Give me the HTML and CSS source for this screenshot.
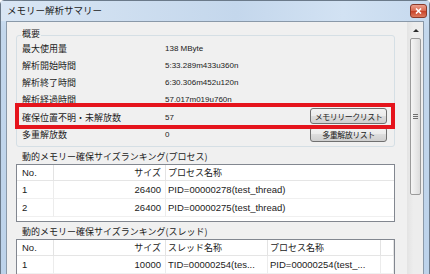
FILE: index.html
```html
<!DOCTYPE html>
<html lang="ja">
<head>
    <meta charset="UTF-8">
    <title>メモリー解析サマリー</title>
    <link rel="stylesheet" href="styles.css">
</head>
<body>
    <div class="window">
        <div class="titlebar">
            <span class="title">メモリー解析サマリー</span>
            <span class="close">
                <svg width="7" height="6" viewBox="0 0 7 6"><path d="M1 0.5 L6 5.5 M6 0.5 L1 5.5" stroke="#fff" stroke-width="1.6"/></svg>
            </span>
        </div>

        <div class="client">
            <div class="content">
                <div class="group">
                    <div class="group-title">概要</div>
                    <div class="row"><span class="label">最大使用量</span><span class="value">138 MByte</span></div>
                    <div class="row"><span class="label">解析開始時間</span><span class="value">5:33.289m433u360n</span></div>
                    <div class="row"><span class="label">解析終了時間</span><span class="value">6:30.306m452u120n</span></div>
                    <div class="row"><span class="label">解析経過時間</span><span class="value">57.017m019u760n</span></div>
                    <div class="row row-tall">
                        <span class="label">確保位置不明・未解放数</span><span class="value">57</span>
                        <button class="btn">メモリリークリスト</button>
                    </div>
                    <div class="row row-short">
                        <span class="label">多重解放数</span><span class="value">0</span>
                        <button class="btn btn-short">多重解放リスト</button>
                    </div>
                    <!-- annotation frame drawn over the row -->
                    <div class="highlight"></div>
                </div>

                <div class="section-label">動的メモリー確保サイズランキング(プロセス)</div>
                <div class="list list-process">
                    <div class="list-row head">
                        <div class="cell">No.</div>
                        <div class="cell num jp">サイズ</div>
                        <div class="cell jp">プロセス名称</div>
                    </div>
                    <div class="list-row">
                        <div class="cell">1</div>
                        <div class="cell num">26400</div>
                        <div class="cell">PID=00000278(test_thread)</div>
                    </div>
                    <div class="list-row">
                        <div class="cell">2</div>
                        <div class="cell num">26400</div>
                        <div class="cell">PID=00000275(test_thread)</div>
                    </div>
                    <div class="list-fill"></div>
                </div>

                <div class="section-label">動的メモリー確保サイズランキング(スレッド)</div>
                <div class="list list-thread">
                    <div class="list-row head">
                        <div class="cell">No.</div>
                        <div class="cell num jp">サイズ</div>
                        <div class="cell jp">スレッド名称</div>
                        <div class="cell jp">プロセス名称</div>
                        <div class="cell"></div>
                    </div>
                    <div class="list-row">
                        <div class="cell">1</div>
                        <div class="cell num">10000</div>
                        <div class="cell">TID=00000254(tes...</div>
                        <div class="cell">PID=00000254(test_...</div>
                        <div class="cell"></div>
                    </div>
                </div>
            </div>

            <div class="scrollbar">
                <div class="arrow-up"><span></span></div>
                <div class="thumb"><span class="grip"></span></div>
            </div>
        </div>
    </div>
</body>
</html>
```

FILE: styles.css
```css
/* Base */
body {
    margin: 0;
    width: 430px;
    height: 274px;
    overflow: hidden;
    background: #ffffff;
    font-family: "Noto Sans CJK JP", sans-serif;
    color: #1b1b1b;
}

/* Window frame */
.window {
    width: 430px;
    height: 300px;
    box-sizing: border-box;
    border: 1px solid #6b7a8a;
    border-radius: 4px 4px 0 0;
    background: linear-gradient(#d3e3f4, #c3d7ec 30px, #bcd2ea);
    display: flex;
    flex-direction: column;
}

.titlebar {
    height: 20px;
    display: flex;
    justify-content: space-between;
    align-items: flex-start;
    padding: 0 2px 0 6px;
    background: linear-gradient(90deg, #d9e6f4, #c4d7ec 55%, #d2e2f3 80%, #c6d9ee);
}

.title {
    font-size: 9.5px;
    line-height: 19px;
}

.close {
    margin-top: 3px;
    width: 17px;
    height: 14px;
    box-sizing: border-box;
    border: 1px solid #8a3a2a;
    border-radius: 3px;
    background: linear-gradient(#eba08e, #d8684f 50%, #c63f25 50%, #dd7a5e);
    display: flex;
    align-items: center;
    justify-content: center;
}

/* Client area */
.client {
    flex: 1;
    margin: 0 5px;
    border: 1px solid #8a99a9;
    background: #f0f0f0;
    display: flex;
}

.content {
    flex: 1;
    padding: 0 12px 0 9px;
}

/* Group box */
.group {
    position: relative;
    margin-top: 13px;
    border: 1px solid #d5dfe5;
    border-radius: 3px;
    padding: 0 7px 4px 5px;
}

.group-title {
    width: fit-content;
    margin: -9px 0 0 -1px;
    padding: 0 1px;
    background: #f0f0f0;
    font-size: 9px;
    line-height: 13px;
}

.row {
    display: flex;
    align-items: center;
    height: 17px;
    font-size: 9px;
}

.row-tall {
    height: 19px;
}

.row-short {
    height: 15px;
}

.label {
    width: 143px;
    line-height: 13px;
}

.value {
    flex: 1;
    font-family: "Liberation Sans", sans-serif;
    font-size: 8px;
}

.btn {
    align-self: flex-start;
    width: 77px;
    height: 16px;
    padding: 0;
    border: 1px solid #707070;
    border-radius: 3px;
    background: linear-gradient(#f2f2f2, #ebebeb 50%, #dddddd 50%, #cfcfcf);
    font-family: "Noto Sans CJK JP", sans-serif;
    font-size: 8px;
    letter-spacing: -0.5px;
    line-height: 13px;
    white-space: nowrap;
    color: #1b1b1b;
}

.btn-short {
    height: 15px;
}

.highlight {
    position: absolute;
    left: -2px;
    top: 67px;
    width: 380px;
    height: 26px;
    box-sizing: border-box;
    border: 4px solid #e5141c;
}

.section-label {
    padding: 2px 0 0 6px;
    height: 15px;
    line-height: 15px;
    font-size: 9px;
}

/* List views */
.list {
    border: 1px solid #828790;
    background: #ffffff;
    font-family: "Liberation Sans", sans-serif;
    font-size: 9.5px;
    color: #1b1b1b;
}

.list-row {
    display: grid;
    height: 18px;
}

.list-row.head {
    height: 16px;
}

.list-process .list-row {
    grid-template-columns: 37px 112px 1fr;
}

.list-thread .list-row {
    grid-template-columns: 37px 112px 102px 113px 1fr;
}

.cell {
    box-sizing: border-box;
    border-right: 1px solid #ececec;
    border-bottom: 1px solid #f0f0f0;
    padding: 0 2px;
    line-height: 17px;
    white-space: nowrap;
    overflow: hidden;
}

.cell:first-child {
    padding-left: 5px;
}

.list-process .cell:last-child {
    border-right: none;
}

.head .cell {
    line-height: 15px;
    border-right-color: #e3e3e3;
    border-bottom-color: #e5e5e5;
}

.cell.num {
    text-align: right;
    padding-right: 4px;
}

.jp {
    font-family: "Noto Sans CJK JP", sans-serif;
    font-size: 9px;
}

.list-fill {
    height: 4px;
}

/* Scrollbar */
.scrollbar {
    width: 16px;
    background: linear-gradient(90deg, #e3e3e3, #ededed 40%, #ededed);
    display: flex;
    flex-direction: column;
}

.arrow-up {
    height: 16px;
    display: flex;
    align-items: center;
    justify-content: center;
}

.arrow-up span {
    width: 0;
    height: 0;
    margin-left: 1px;
    border-left: 3px solid transparent;
    border-right: 3px solid transparent;
    border-bottom: 3px solid #2b2b2b;
}

.thumb {
    height: 157px;
    margin: 0 2px 0 3px;
    box-sizing: border-box;
    border: 1px solid #9a9a9a;
    border-radius: 2px;
    background: linear-gradient(90deg, #f5f5f5, #e9e9e9 50%, #dcdcdc);
    display: flex;
    align-items: center;
    justify-content: center;
}

.grip {
    width: 5px;
    height: 5px;
    background: repeating-linear-gradient(#6f6f6f 0 1px, transparent 1px 2px);
}
```
